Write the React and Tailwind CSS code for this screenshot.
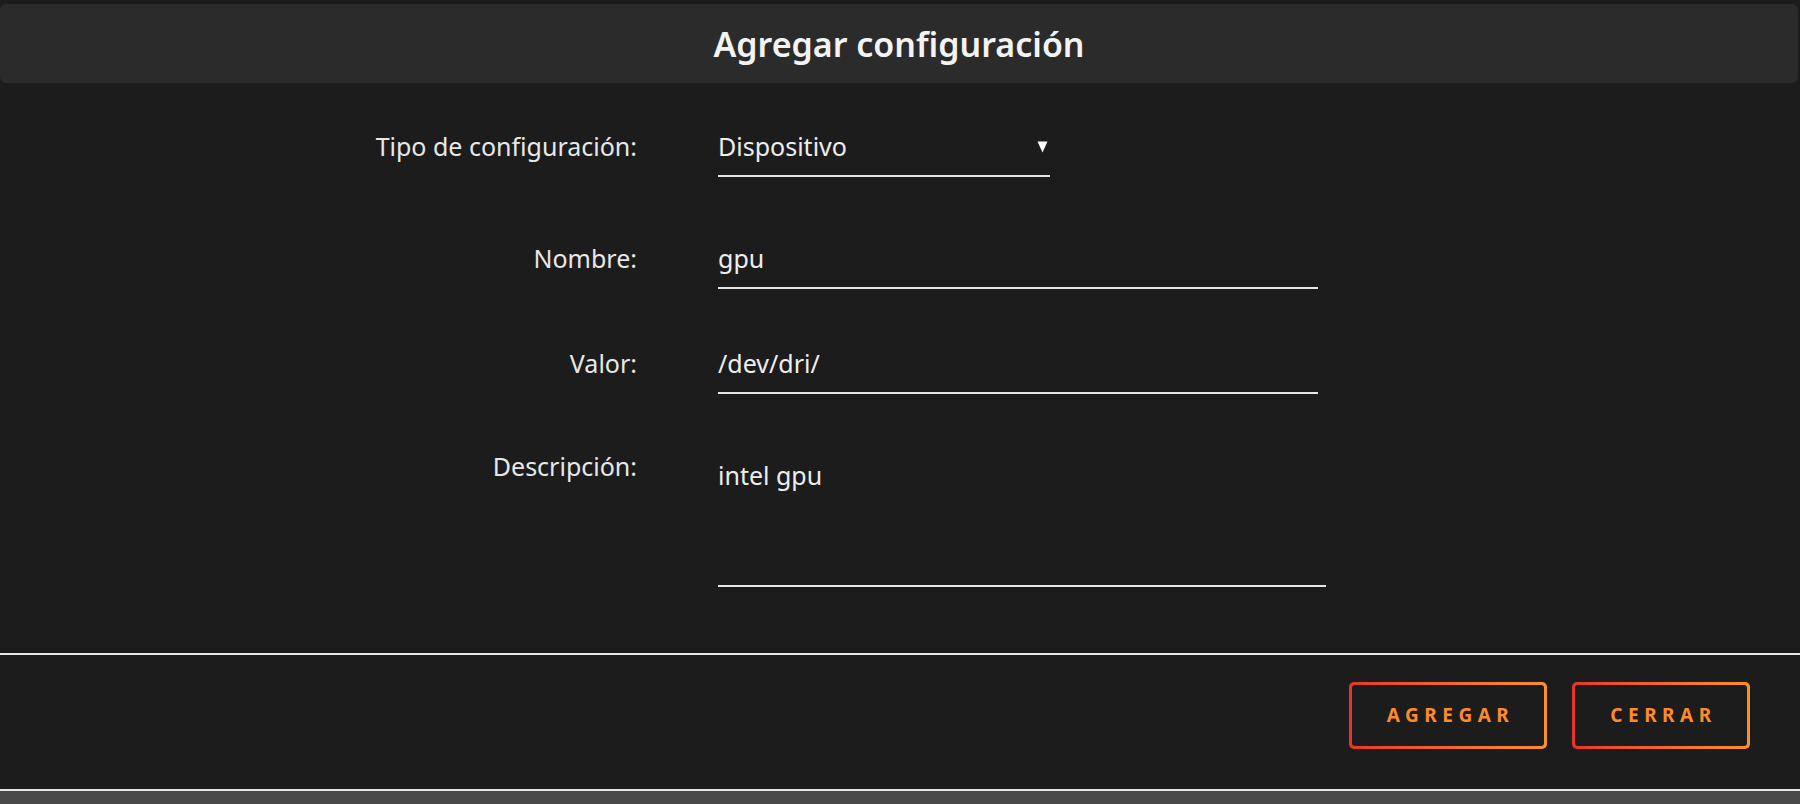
const labelCls = "text-right text-[25px] leading-[33px] text-[#e8e8e8]";
const valueCls = "text-[25px] leading-[33px] text-[#eeeeee]";

const GradientButton = ({ label, width }) => (
  <div className={`rounded-[5px] bg-gradient-to-r from-[#e8332a] to-[#ff8f2b] p-[3px] h-[67px] ${width}`}>
    <button className="w-full h-full rounded-[3px] bg-[#1c1c1c] flex items-center justify-center text-[19px] font-bold tracking-[5.5px] pl-[5px] text-[#ff8a2c]">
      {label}
    </button>
  </div>
);

export default function App() {
  return (
    <div
      className="w-full h-[804px] bg-[#1c1c1c] flex flex-col overflow-hidden"
      style={{ fontFamily: '"Noto Sans", "Open Sans", sans-serif' }}
    >
      {/* Header */}
      <div className="mt-1 mr-[2px] h-[79px] shrink-0 bg-[#2b2b2b] rounded-md flex items-center justify-center">
        <h1 className="text-[34px] font-semibold text-[#f3f3f3] leading-none">Agregar configuración</h1>
      </div>

      {/* Form */}
      <div className="grid grid-cols-[637px_1fr] gap-x-[81px] mt-[47px]">
        {/* Tipo */}
        <div className={labelCls}>Tipo de configuración:</div>
        <div className="w-[332px] pb-3 border-b-2 border-[#e6e6e6] flex items-start justify-between">
          <span className={valueCls}>Dispositivo</span>
          <svg width="11" height="12" viewBox="0 0 11 12" className="mt-[11px] mr-[2px]">
            <polygon points="0.5,0.5 10.5,0.5 5.5,11.5" fill="#ffffff" />
          </svg>
        </div>

        {/* Nombre */}
        <div className={`${labelCls} mt-[65px]`}>Nombre:</div>
        <div className="mt-[65px] w-[600px] pb-3 border-b-2 border-[#e6e6e6]">
          <span className={valueCls}>gpu</span>
        </div>

        {/* Valor */}
        <div className={`${labelCls} mt-[58px]`}>Valor:</div>
        <div className="mt-[58px] w-[600px] pb-3 border-b-2 border-[#e6e6e6]">
          <span className={valueCls}>/dev/dri/</span>
        </div>

        {/* Descripción */}
        <div className={`${labelCls} mt-[56px]`}>Descripción:</div>
        <div className="mt-[56px] w-[608px] h-[137px] pt-[9px] border-b-2 border-[#e6e6e6]">
          <span className={valueCls}>intel gpu</span>
        </div>
      </div>

      {/* Footer */}
      <div className="mt-[66px] h-[138px] shrink-0 border-t-2 border-b-2 border-[#e6e6e6] flex justify-end gap-[25px] pr-[50px] pt-[27px]">
        <GradientButton label="AGREGAR" width="w-[198px]" />
        <GradientButton label="CERRAR" width="w-[178px]" />
      </div>
      <div className="flex-1 bg-[#494949]" />
    </div>
  );
}
